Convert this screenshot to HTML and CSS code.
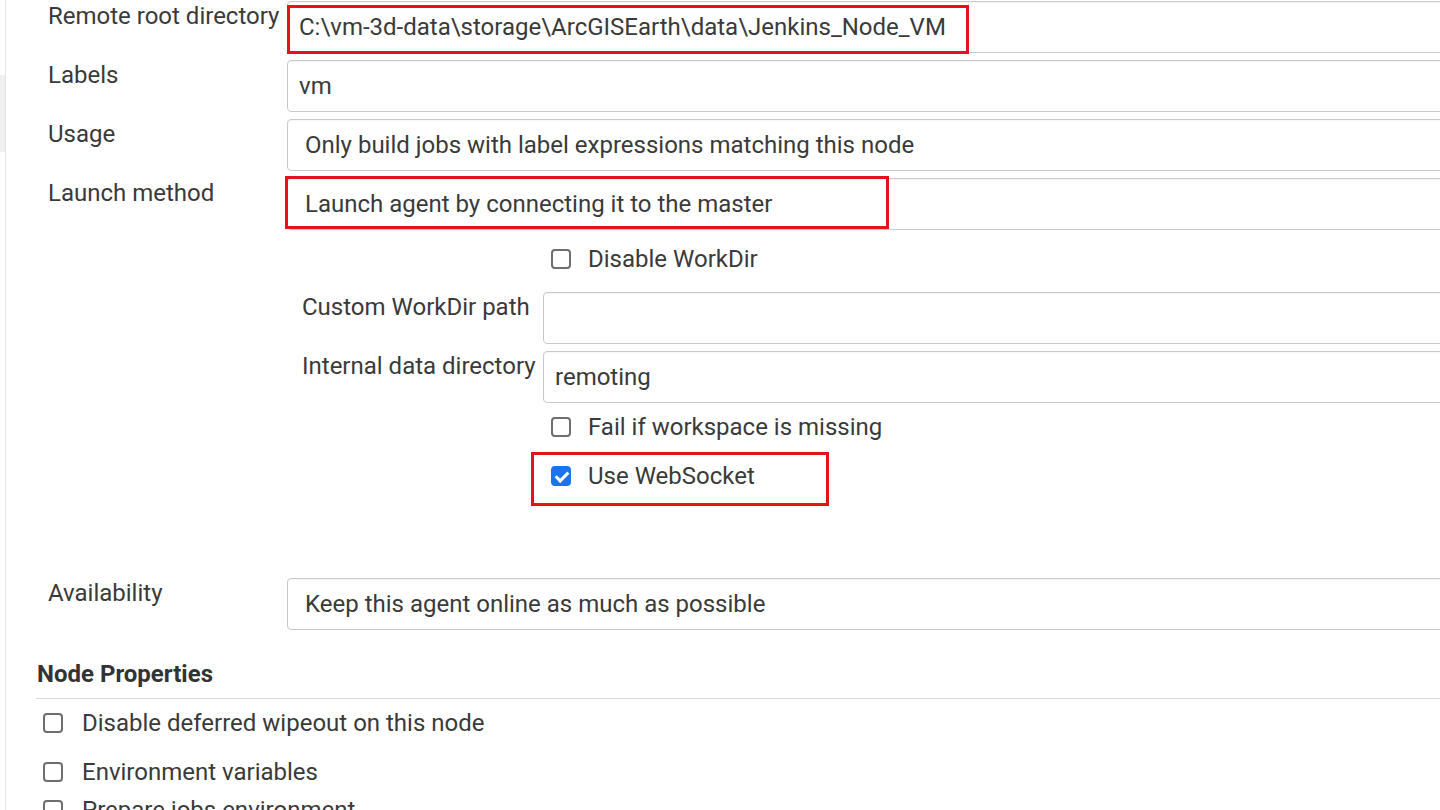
FILE: index.html
```html
<!DOCTYPE html>
<html lang="en">
<head>
    <meta charset="UTF-8">
    <meta name="viewport" content="width=device-width, initial-scale=1">
    <title>Jenkins - Node configuration</title>
    <link rel="stylesheet" href="styles.css">
</head>
<body>

<div class="page">
    <div class="side"><div class="side-item"></div></div>

    <div class="main">
        <div class="row first">
            <div class="lbl">Remote root directory</div>
            <div class="field">
                <div class="box text">C:\vm-3d-data\storage\ArcGISEarth\data\Jenkins_Node_VM</div>
                <span class="mark mark-root"></span>
            </div>
        </div>

        <div class="row">
            <div class="lbl">Labels</div>
            <div class="field"><div class="box text">vm</div></div>
        </div>

        <div class="row">
            <div class="lbl">Usage</div>
            <div class="field"><div class="box select">Only build jobs with label expressions matching this node</div></div>
        </div>

        <div class="row">
            <div class="lbl">Launch method</div>
            <div class="field">
                <div class="box select">Launch agent by connecting it to the master</div>
                <span class="mark mark-launch"></span>

                <div class="nested">
                    <div class="check in-nest disable-workdir">
                        <input type="checkbox"> <span class="ck-text">Disable WorkDir</span>
                    </div>
                    <div class="row sub custom-workdir">
                        <div class="lbl sub-lbl">Custom WorkDir path</div>
                        <div class="field"><div class="box text"></div></div>
                    </div>
                    <div class="row sub">
                        <div class="lbl sub-lbl">Internal data directory</div>
                        <div class="field"><div class="box text">remoting</div></div>
                    </div>
                    <div class="check in-nest fail-ws">
                        <input type="checkbox"> <span class="ck-text">Fail if workspace is missing</span>
                    </div>
                    <div class="check in-nest websocket">
                        <input type="checkbox" checked> <span class="ck-text">Use WebSocket</span>
                        <span class="mark mark-ws"></span>
                    </div>
                </div>
            </div>
        </div>

        <div class="row availability">
            <div class="lbl">Availability</div>
            <div class="field"><div class="box select">Keep this agent online as much as possible</div></div>
        </div>

        <h3 class="section">Node Properties</h3>

        <div class="check prop">
            <input type="checkbox"> <span class="ck-text">Disable deferred wipeout on this node</span>
        </div>
        <div class="check prop">
            <input type="checkbox"> <span class="ck-text">Environment variables</span>
        </div>
        <div class="check prop last">
            <input type="checkbox"> <span class="ck-text">Prepare jobs environment</span>
        </div>
    </div>
</div>

</body>
</html>
```

FILE: styles.css
```css
html, body { margin: 0; padding: 0; background: #fff; overflow: hidden; }
body { font-family: Roboto, "Liberation Sans", Arial, sans-serif; font-size: 24px; line-height: 28px; color: #3a3a3a; }

.page { display: flex; min-height: 810px; }
.side { width: 5px; flex: none; border-right: 1px solid #e4e4e4; }
.side-item { margin-top: 75px; height: 77px; background: #f0f0f1; }

.main { width: 1520px; flex: none; padding-left: 30px; }

/* label + field rows */
.row { display: flex; margin-top: 7px; }
.row.first { margin-top: 1px; }
.lbl { width: 239px; flex: none; padding: 1px 0 0 12px; white-space: nowrap; }
.field { flex: 1; position: relative; }

.box { height: 50px; border: 1px solid #c9c9c9; border-radius: 4px; box-shadow: inset 0 1px 1px rgba(0,0,0,.04); line-height: 50px; white-space: nowrap; overflow: hidden; }
.box.text { padding-left: 11px; }
.box.select { padding-left: 17px; }

/* nested options under launch method */
.nested { padding-left: 15px; }
.row.sub { margin-top: 7px; }
.sub-lbl { width: 241px; padding: 1px 0 0 0; }
.row.custom-workdir { margin-top: 19px; }

.check { display: flex; align-items: center; height: 28px; position: relative; }
.ck-text { margin-left: 17px; }
.in-nest { padding-left: 249px; }
.disable-workdir { margin-top: 15px; }
.fail-ws { margin-top: 10px; }
.websocket { margin-top: 21px; }

.check input { appearance: none; -webkit-appearance: none; margin: 0; width: 20px; height: 20px; flex: none; border: 2px solid #6e6e6e; border-radius: 4px; box-sizing: border-box; position: relative; background: #fff; }
.check input:checked { background: #1b74ee; border-color: #1b74ee; }
.check input:checked::after { content: ""; position: absolute; left: 5px; top: 1px; width: 5px; height: 10px; border: solid #fff; border-width: 0 3px 3px 0; transform: rotate(45deg); }

.row.availability { margin-top: 88px; }

.section { font-size: 24px; font-weight: 700; color: #333; margin: 30px 0 0 0; padding: 0 0 10px 1px; line-height: 28px; border-bottom: 1px solid #dadada; }

.prop { padding-left: 7px; margin-top: 21px; }
.prop .ck-text { margin-left: 19px; }
.section + .prop { margin-top: 10px; }
.prop.last { margin-top: 10px; }

/* red annotation outlines */
.mark { position: absolute; border: 3px solid #e4121c; pointer-events: none; box-sizing: border-box; margin: 0; }
.mark-root { left: 0; top: 4px; width: 682px; height: 49px; }
.mark-launch { left: -2px; top: -2px; width: 604px; height: 53px; }
.mark-ws { left: 229px; top: -10px; width: 298px; height: 54px; }
```
